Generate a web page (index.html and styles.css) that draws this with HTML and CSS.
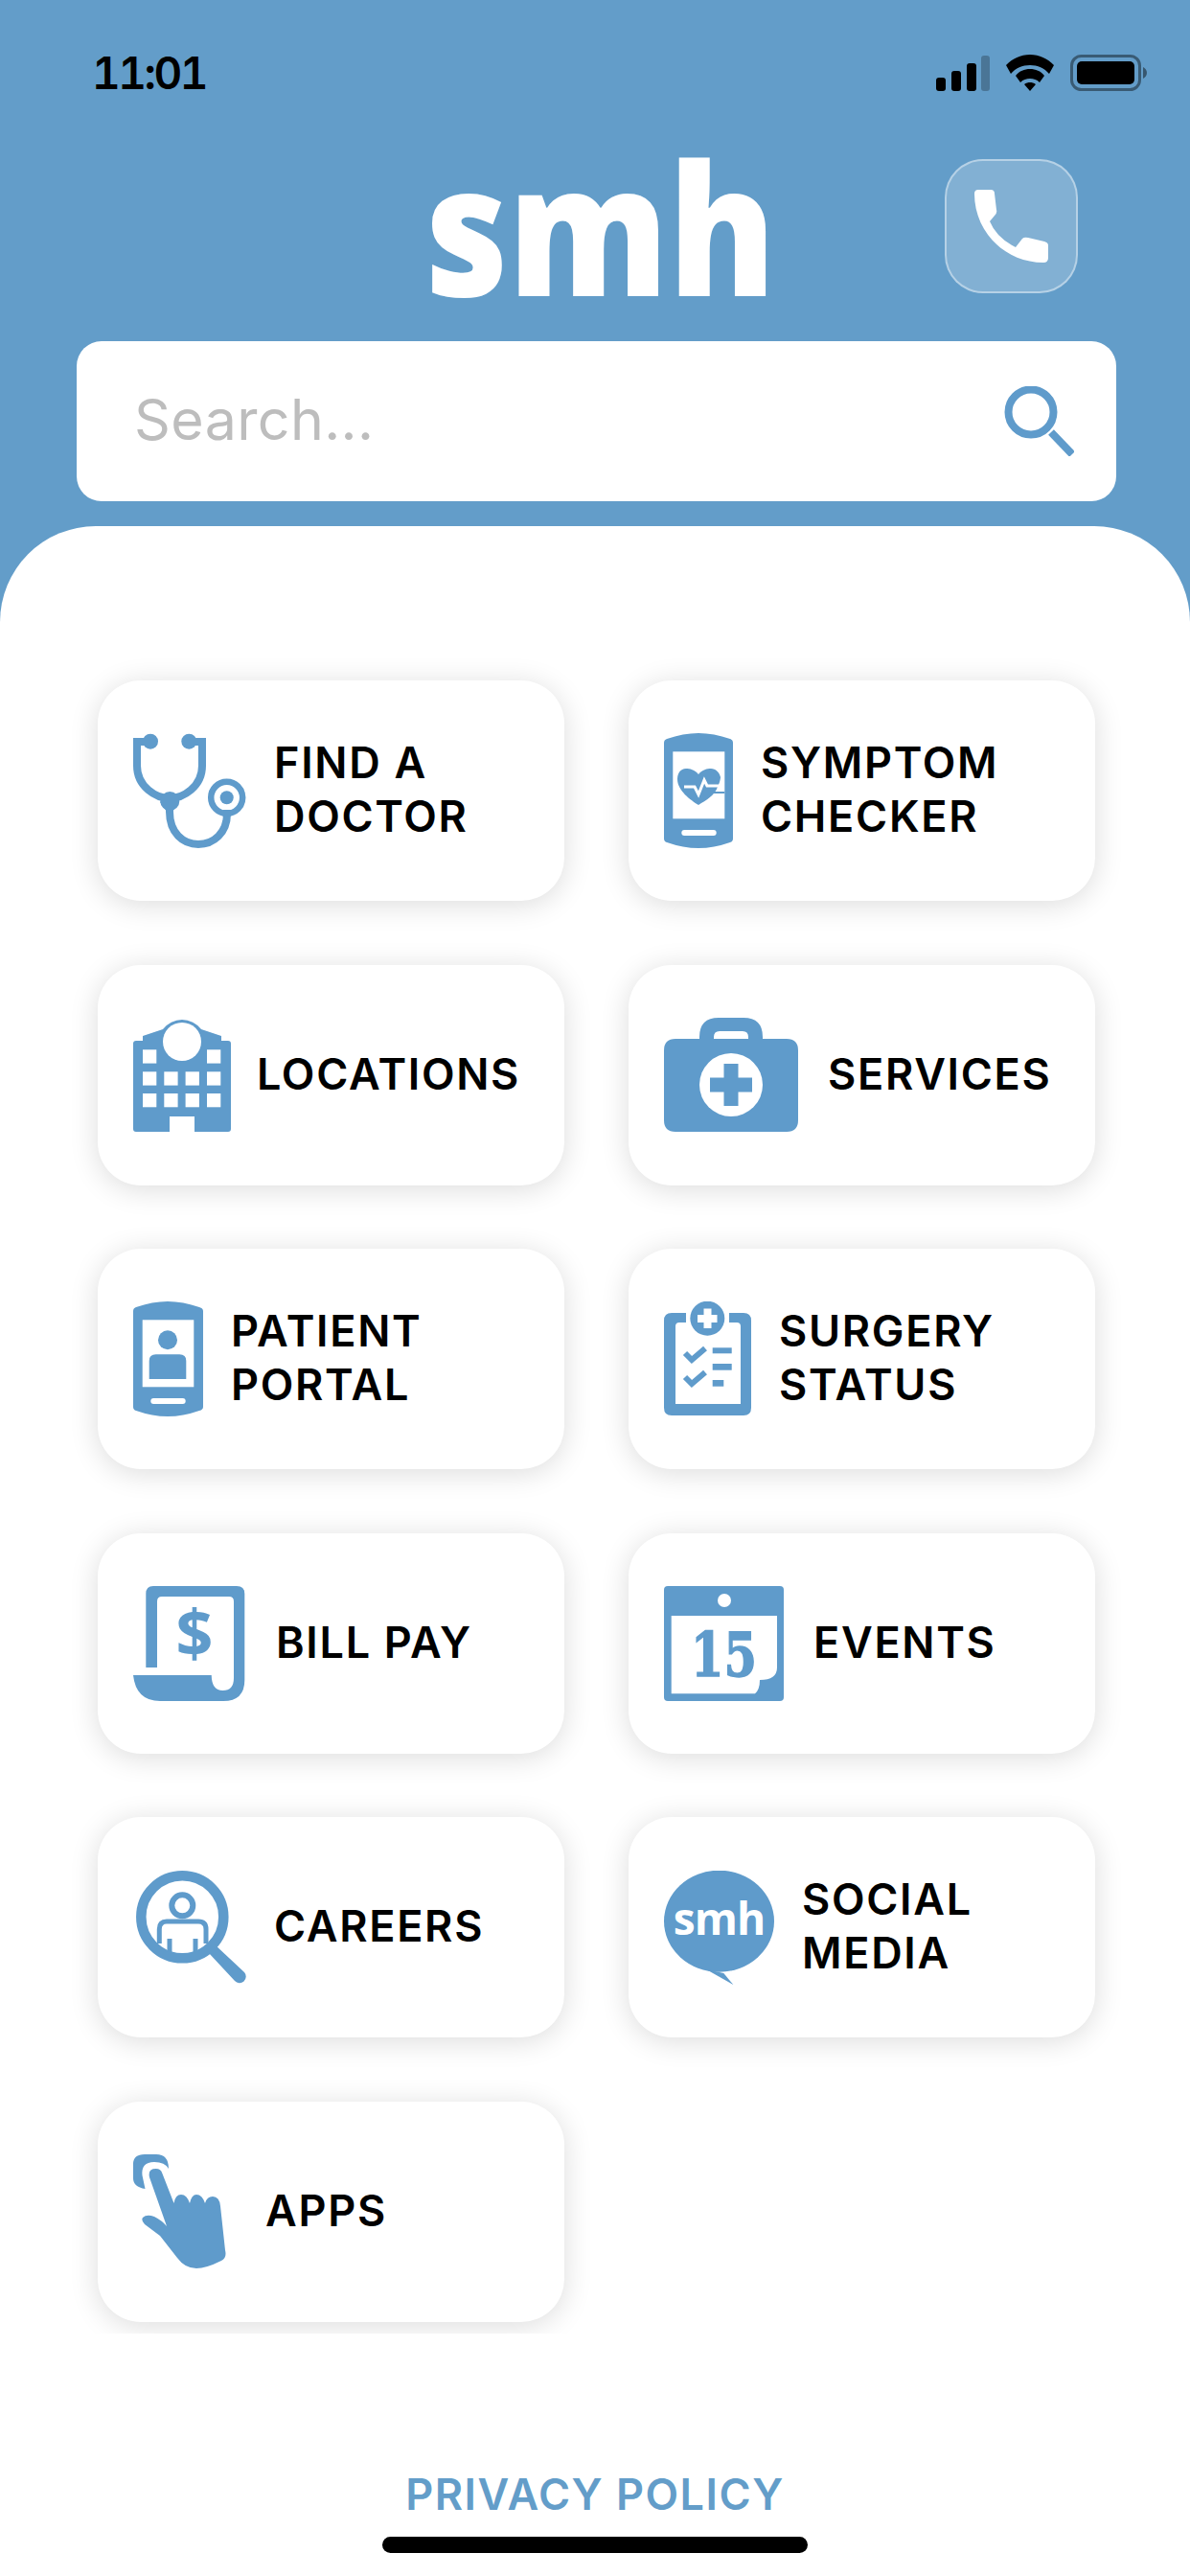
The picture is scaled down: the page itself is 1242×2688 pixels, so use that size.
FILE: index.html
```html
<!DOCTYPE html>
<html lang="en">
<head>
<meta charset="utf-8">
<title>smh</title>
<link rel="stylesheet" href="styles.css">
</head>
<body>
<div class="app">
  <header class="header">
    <div class="status">
      <span class="time">11:01</span>
      <div class="status-icons">
        <svg width="56" height="37" viewBox="0 0 56 37"><rect class="k" x="0" y="23" width="10" height="14" rx="3"/><rect class="k" x="16" y="16" width="10" height="21" rx="3"/><rect class="k" x="32" y="8" width="10" height="29" rx="3"/><rect class="k dim" x="47" y="0" width="9" height="37" rx="3"/></svg>
        <svg width="50" height="38" viewBox="0 0 50 38"><path class="k" d="M25 0C15 0 7 4 0 11l5 9C10 14 17 11 25 11s15 3 20 9l5-9C43 4 35 0 25 0Z"/><path class="k" d="M25 15c-6 0-11 2-15 7l5 7c3-3 6-4 10-4s7 1 10 4l5-7c-4-5-9-7-15-7Z"/><path class="k" d="M25 29c-2 0-4 .5-6 2l6 7 6-7c-2-1.500-4-2-6-2Z"/></svg>
        <svg width="80" height="38" viewBox="0 0 80 38"><rect class="batt" x="1.500" y="1.500" width="71" height="35" rx="10"/><rect class="k" x="7" y="7" width="60" height="24" rx="5"/><path class="capd" d="M76 13v12c2-1 4-3 4-6s-2-5-4-6Z"/></svg>
      </div>
    </div>
    <div class="brand">
      <span class="spacer"></span>
      <div class="logo">smh</div>
      <div class="brand-end">
        <button class="call" type="button" aria-label="Call">
          <svg width="77" height="76" viewBox="0 0 77 76"><path class="w" d="M4 0H17Q21 0 21 4L23 21Q24 24 21 27L16 33Q23 50 43 60L50 51Q52 49 56 50L73 54Q77 55 77 58V71Q77 76 72 76C32 76 0 44 0 4Q0 0 4 0Z"/></svg>
        </button>
      </div>
    </div>
    <div class="search">
      <span class="placeholder">Search...</span>
      <svg width="73" height="73" viewBox="0 0 73 73"><circle class="line" cx="28" cy="27" r="23.500" stroke-width="8"/><path class="line" d="M49 48 71 71" stroke-width="8"/></svg>
    </div>
  </header>

  <main class="sheet">
    <div class="grid-clip">
      <div class="grid">
        <a class="card">
          <svg width="118" height="120" viewBox="0 0 118 120">
            <circle class="b" cx="18" cy="8.700" r="8"/><circle class="b" cx="58.300" cy="8.700" r="8"/>
            <path class="line" stroke-width="8" d="M18 9H4V34C4 56 24 68 38 68C52 68 72 56 72 34V9H58"/>
            <path class="b" d="M38 62L48 72 41 82H35L28 72Z"/><circle class="b" cx="38.300" cy="71" r="10"/>
            <path class="line" stroke-width="8" d="M38 76V82C38 104 52 116 68 116C84 116 98 104 98 84V80"/>
            <circle class="line" stroke-width="6.500" cx="97.700" cy="67.300" r="16.500"/><circle class="b" cx="97.700" cy="67.300" r="7"/>
          </svg>
          <span class="label">FIND A<br>DOCTOR</span>
        </a>
        <a class="card">
          <svg width="72" height="120" viewBox="0 0 72 120">
            <path class="b" d="M0 10Q0 7 3 6Q20 0 36 0Q52 0 69 6Q72 7 72 10V110Q72 113 69 114Q52 120 36 120Q20 120 3 114Q0 113 0 110Z"/>
            <rect class="w" x="9.300" y="19.300" width="54" height="70"/><rect class="w" x="18.300" y="101" width="36.400" height="6" rx="3"/>
            <path class="b" d="M36 43C32 38 27 37 23 37C17 37 14 42 14 48C14 60 28 70 36 75C44 70 53 65 56 56C59 50 59 46 59 46C58 41 54 37 49 37C45 37 40 38 36 43Z"/>
            <path class="wl" stroke-width="3" d="M21 56H32L36 64 42 49 45 55H59"/>
            <path class="line" stroke-width="2" d="M50 62H63.300"/>
          </svg>
          <span class="label">SYMPTOM<br>CHECKER</span>
        </a>
        <a class="card">
          <svg width="100" height="120" viewBox="0 0 100 120" class="over">
            <path class="b" d="M3 24H10V19L31 12A25 25 0 0 1 71 12L92 19V24H99Q102 24 102 27V116Q102 119 99 119H64V103H38V119H3Q0 119 0 116V27Q0 24 3 24Z"/>
            <circle class="w" cx="51" cy="25" r="20"/>
            <rect class="w" x="10" y="33.300" width="14.300" height="14.300"/><rect class="w" x="77" y="33.300" width="14.300" height="14.300"/>
            <rect class="w" x="10" y="56.300" width="14.300" height="14.300"/><rect class="w" x="32.300" y="56.300" width="14.300" height="14.300"/><rect class="w" x="54.600" y="56.300" width="14.300" height="14.300"/><rect class="w" x="77" y="56.300" width="14.300" height="14.300"/>
            <rect class="w" x="10" y="79" width="14.300" height="14.300"/><rect class="w" x="32.300" y="79" width="14.300" height="14.300"/><rect class="w" x="54.600" y="79" width="14.300" height="14.300"/><rect class="w" x="77" y="79" width="14.300" height="14.300"/>
          </svg>
          <span class="label">LOCATIONS</span>
        </a>
        <a class="card">
          <svg width="142" height="119" viewBox="0 0 142 119">
            <path class="b" fill-rule="evenodd" d="M37 22V20Q37 0 57 0H83Q103 0 103 20V22H128Q140 22 140 34V107Q140 119 128 119H12Q0 119 0 107V34Q0 22 12 22ZM52 22H88V20Q88 14 82 14H58Q52 14 52 20Z"/>
            <circle class="w" cx="70" cy="70" r="33"/>
            <path class="b" d="M62.500 48H77.500V62.500H92V77.500H77.500V92H62.500V77.500H48V62.500H62.500Z"/>
          </svg>
          <span class="label">SERVICES</span>
        </a>
        <a class="card">
          <svg width="73" height="120" viewBox="0 0 73 120">
            <path class="b" d="M0 10Q0 7 3 6Q20 0 36 0Q52 0 69 6Q73 7 73 10V110Q73 113 69 114Q52 120 36 120Q20 120 3 114Q0 113 0 110Z"/>
            <rect class="w" x="9.700" y="19.300" width="53.600" height="70"/><rect class="w" x="18.300" y="101" width="36.400" height="6" rx="3"/>
            <circle class="b" cx="36" cy="40.300" r="10"/>
            <path class="b" d="M16.700 81V62Q16.700 55.300 23.700 55.300H48.300Q55.300 55.300 55.300 62V81Z"/>
          </svg>
          <span class="label">PATIENT<br>PORTAL</span>
        </a>
        <a class="card">
          <svg width="91" height="120" viewBox="0 0 91 120">
            <path class="b" d="M23 12H8Q0 12 0 20V111Q0 119 8 119H83Q91 119 91 111V20Q91 12 83 12H68V22H76Q80 22 80 26V107H12V26Q12 22 16 22H23Z"/>
            <circle class="b" cx="45.300" cy="17.700" r="18"/>
            <path class="w" d="M41.500 7.500H49.500V14H55.500V22H49.500V28H41.500V22H35V14H41.500Z"/>
            <path class="line" stroke-width="6" d="M22 54 29 61 43 49"/><path class="line" stroke-width="6" d="M22 79 29 86 43 74"/>
            <rect class="b" x="50.700" y="48.300" width="20" height="6"/><rect class="b" x="50.700" y="65" width="20" height="6.700"/><rect class="b" x="50.700" y="82" width="11.600" height="6.700"/>
          </svg>
          <span class="label">SURGERY<br>STATUS</span>
        </a>
        <a class="card">
          <svg width="120" height="120" viewBox="0 0 120 120">
            <path class="b" d="M13.300 85V8Q13.300 0 21 0H108Q116.300 0 116.300 8V98Q116.300 120 94 120H28Q3 120 0 93H81.700Q82 109 93.500 109Q105 109 105 96V16Q105 11 100 11H30Q25 11 25 16V85Z"/>
            <text class="t-dollar" x="64" y="74" text-anchor="middle">$</text>
          </svg>
          <span class="label">BILL PAY</span>
        </a>
        <a class="card">
          <svg width="127" height="120" viewBox="0 0 127 120">
            <rect class="b" width="125" height="120" rx="4"/>
            <circle class="w" cx="63" cy="15" r="7"/>
            <path class="w" d="M7.700 31H118V85Q118 98 100 98Q100 108 95 112.300H7.700Z"/>
            <text class="t-date" x="28" y="94" textLength="69" lengthAdjust="spacingAndGlyphs">15</text>
          </svg>
          <span class="label">EVENTS</span>
        </a>
        <a class="card">
          <svg width="118" height="118" viewBox="-3 0 118 118">
            <path class="line" stroke-width="5" d="M24.300 76V61Q24.300 53 32 53H65Q73 53 73 61V76"/>
            <path class="line" stroke-width="5" d="M35 71V86M62 71V86"/>
            <circle class="line" stroke-width="6" cx="48.300" cy="36.300" r="11"/>
            <circle class="line" stroke-width="10.500" cx="48.300" cy="48.300" r="43"/>
            <path class="b" d="M82 77 113 106A6.500 6.500 0 0 1 103 115L76 86Z"/>
          </svg>
          <span class="label">CAREERS</span>
        </a>
        <a class="card">
          <svg width="115" height="119" viewBox="0 0 115 119">
            <ellipse class="b" cx="57.500" cy="52.700" rx="57.500" ry="53"/>
            <path class="b" d="M44 103 72.300 119 62.300 107Z"/>
            <text class="t-bubble" x="57.500" y="67" text-anchor="middle">smh</text>
          </svg>
          <span class="label">SOCIAL<br>MEDIA</span>
        </a>
        <a class="card">
          <svg width="109" height="119" viewBox="0 0 109 119">
            <path class="b" d="M12.500 36Q0 34 0 25V10Q0 0 12 0H24Q37 0 37 15Q33 8 22 8Q8 8 9.500 22Z"/>
            <path class="b" d="M17 24Q15 15 23.700 15Q29 15 30.400 20L42.500 51Q44 42 50 42Q56 42 59 51Q61 42 66 42Q72 42 75 51Q77 44 83 44Q90 44 91 54L96 100Q98 108 92 111Q76 119 66 119Q54 119 46 108L28 85L12 73Q8 69 10 66Q14 62 22 65Q30 69 35 75Z"/>
          </svg>
          <span class="label">APPS</span>
        </a>
      </div>
    </div>
    <a class="privacy">PRIVACY POLICY</a>
    <div class="home-bar"></div>
  </main>
</div>
</body>
</html>
```
FILE: styles.css
```css
* { box-sizing: border-box; }
html, body { margin: 0; padding: 0; }
body { font-family: Inter, "Liberation Sans", sans-serif; background: #fff; }
.app { width: 1242px; height: 2688px; overflow: hidden; background: #639dc9; display: flex; flex-direction: column; }

.b { fill: #5f9bcb; }
.w { fill: #fff; }
.k { fill: #000; }
.dim { opacity: .25; }
.line { fill: none; stroke: #5f9bcb; }
.wl { fill: none; stroke: #fff; }
.over { overflow: visible; }
.batt { fill: none; stroke: #000; stroke-opacity: .42; stroke-width: 3; }
.capd { fill: #000; opacity: .45; }
.t-dollar { font-family: "Open Sans", sans-serif; font-weight: 700; font-size: 68px; fill: #5f9bcb; }
.t-date { font-family: "DejaVu Serif", serif; font-weight: 700; font-size: 64px; fill: #5f9bcb; stroke: #5f9bcb; stroke-width: 1.500px; }
.t-bubble { font-family: "Open Sans", sans-serif; font-weight: 700; font-size: 46px; letter-spacing: -1px; fill: #fff; }

.header { flex: none; display: flex; flex-direction: column; padding: 57px 0 26px; }
.status { height: 38px; display: flex; align-items: center; justify-content: space-between; padding: 0 45px 0 96px; }
.time { font-size: 46px; font-weight: 600; line-height: 38px; color: #000; font-variant-numeric: tabular-nums; letter-spacing: -2.500px; }
.status-icons { display: flex; align-items: center; gap: 17px; }

.brand { margin-top: 71px; height: 140px; display: grid; grid-template-columns: 1fr auto 1fr; padding: 0 117px; }
.logo { font-family: "Open Sans", sans-serif; font-weight: 800; font-stretch: 90%; font-size: 190px; line-height: 140px; letter-spacing: 0; color: #fff; padding: 0 0 30px 14px; transform: scaleX(.88); }
.brand-end { display: flex; justify-content: flex-end; }
.call { width: 139px; height: 140px; padding: 0; border: 2px solid rgba(255,255,255,.42); border-radius: 40px; background: rgba(255,255,255,.2); display: flex; align-items: center; justify-content: center; }

.search { margin: 50px 77px 0 80px; height: 167px; background: #fff; border-radius: 26px; display: flex; align-items: center; justify-content: space-between; padding: 0 44px 0 60px; }
.placeholder { font-size: 59px; font-weight: 400; letter-spacing: .4px; color: #bdbdbd; padding-bottom: 4px; }

.sheet { flex: 1; min-height: 0; background: #fff; border-radius: 100px 100px 0 0; display: flex; flex-direction: column; align-items: center; }
.grid-clip { width: 100%; overflow: hidden; padding: 161px 99px 12px 102px; }
.grid { display: grid; grid-template-columns: 487px 487px; column-gap: 67px; row-gap: 66.500px; }
.card { height: 230px; background: #fff; border-radius: 45px; box-shadow: 0 4px 30px rgba(0,0,0,.14); display: flex; align-items: center; gap: 29px; padding-left: 37px; }
.card svg { flex: none; }
.label { font-size: 45px; font-weight: 600; line-height: 56px; letter-spacing: 1.700px; color: #000; padding-bottom: 2px; }

.privacy { margin-top: 140px; font-size: 45px; font-weight: 600; line-height: 56px; letter-spacing: 1.500px; color: #639dc9; }
.home-bar { margin-top: 16px; width: 444px; height: 17px; border-radius: 9px; background: #000; }
```
